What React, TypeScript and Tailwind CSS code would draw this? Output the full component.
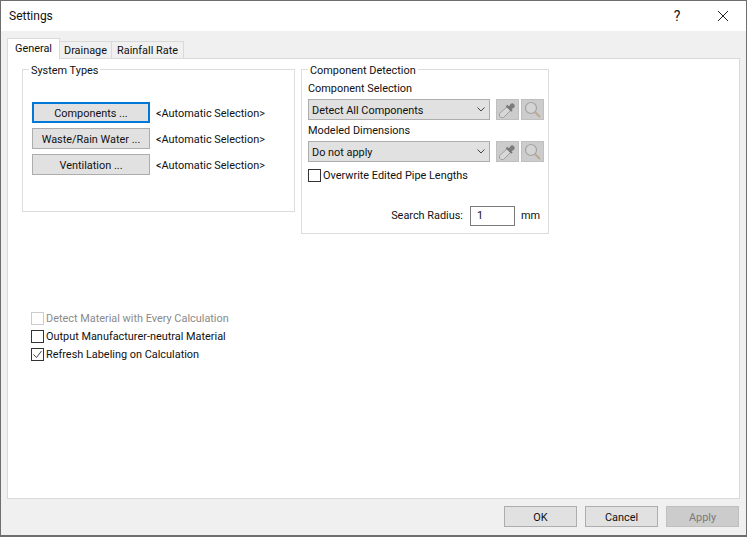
import React from 'react';

const font = { fontFamily: 'Roboto, "Noto Sans", sans-serif' };

function Picker() {
  return (
    <div className="w-[23px] h-[21px] bg-[#cccccc] border border-[#bfbfbf] flex items-center justify-center">
      <svg width="19" height="19" viewBox="0 0 19 19" fill="none">
        <path d="M9 7l3.5 3.5-7 7H3l-1.5-1.5v-2.5z" fill="#d8d8d8" stroke="#a0a0a0" strokeWidth="1" />
        <path d="M8.5 5.5l5.5 5.5" stroke="#767676" strokeWidth="2" />
        <path d="M10.5 7l2.2-3.2a2.6 2.6 0 0 1 3.6 3.6L13 9.5z" fill="#7c7c7c" />
      </svg>
    </div>
  );
}

function Finder() {
  return (
    <div className="w-[23px] h-[21px] bg-[#cccccc] border border-[#bfbfbf] flex items-center justify-center">
      <svg width="19" height="19" viewBox="0 0 19 19" fill="none">
        <circle cx="8" cy="8" r="5.5" fill="#d4d4d4" stroke="#a3a3a3" strokeWidth="1.2" />
        <path d="M12 12l5 5" stroke="#bda98f" strokeWidth="2" />
      </svg>
    </div>
  );
}

function Combo({ label }: { label: string }) {
  return (
    <div className="w-[182px] h-[21px] bg-[#e1e1e1] border border-[#adadad] flex items-center justify-between pl-[3px] pr-[4px] text-[#111]">
      <span className="pt-[2px]">{label}</span>
      <svg width="8" height="5" viewBox="0 0 8 5" fill="none">
        <path d="M0.5 0.5l3.5 3.5 3.5-3.5" stroke="#444" strokeWidth="1" />
      </svg>
    </div>
  );
}

function Check({ label, checked, disabled }: { label: string; checked?: boolean; disabled?: boolean }) {
  return (
    <div className="flex items-center h-[18px] gap-[2px]">
      <div className={`w-[13px] h-[13px] border bg-white flex items-center justify-center ${disabled ? 'border-[#cccccc]' : 'border-[#333333]'}`}>
        {checked && (
          <svg width="11" height="11" viewBox="0 0 11 11" fill="none">
            <path d="M1.5 5.5l3 3 5-6.5" stroke="#444" strokeWidth="1" />
          </svg>
        )}
      </div>
      <span className={`pt-[2px] ${disabled ? 'text-[#8a8a8a]' : 'text-[#111]'}`}>{label}</span>
    </div>
  );
}

function SystemButton({ label, focused }: { label: string; focused?: boolean }) {
  return (
    <div className="flex items-center gap-[6px]">
      <div className={`w-[118px] h-[21px] bg-[#e1e1e1] flex items-center justify-center pt-[2px] text-[#111] ${focused ? 'border-2 border-[#0078d7]' : 'border border-[#adadad]'}`}>
        {label}
      </div>
      <span className="text-[#111] pt-[2px]">&lt;Automatic Selection&gt;</span>
    </div>
  );
}

function FooterButton({ label, disabled }: { label: string; disabled?: boolean }) {
  return (
    <div className={`w-[73px] h-[21px] flex items-center justify-center pt-[2px] border ${disabled ? 'bg-[#cccccc] border-[#bfbfbf] text-[#7a7a7a]' : 'bg-[#e1e1e1] border-[#adadad] text-[#111]'}`}>
      {label}
    </div>
  );
}

export default function App() {
  return (
    <div style={font} className="w-[747px] h-[537px] flex flex-col bg-[#f0f0f0] border border-[#6e6e6e] border-b-2 text-[10.9px] leading-[16px] overflow-hidden">
      {/* Title bar */}
      <div className="h-[30px] shrink-0 bg-white flex items-center pl-[8px]">
        <span className="flex-1 text-[12px] text-[#111]">Settings</span>
        <span className="w-[46px] text-center text-[14px] text-[#111]">?</span>
        <div className="w-[46px] flex justify-center">
          <svg width="12" height="12" viewBox="0 0 12 12" fill="none">
            <path d="M1 1l10 10M11 1L1 11" stroke="#222" strokeWidth="1" />
          </svg>
        </div>
      </div>

      {/* Tabs */}
      <div className="h-[28px] shrink-0 flex items-end pl-[6px] relative z-10">
        <div className="h-[21px] w-[53px] bg-white border border-[#d9d9d9] border-b-0 flex items-center justify-center text-[#111]">General</div>
        <div className="h-[18px] w-[52px] bg-[#f0f0f0] border border-[#d9d9d9] border-l-0 flex items-center justify-center pt-[2px] text-[#111]">Drainage</div>
        <div className="h-[18px] w-[72px] bg-[#f0f0f0] border border-[#d9d9d9] border-l-0 flex items-center justify-center pt-[2px] text-[#111]">Rainfall Rate</div>
      </div>

      {/* Tab page */}
      <div className="mx-[6px] h-[441px] shrink-0 -mt-px bg-white border border-[#d9d9d9] pl-[14px] pt-[10px]">
        <div className="flex items-start gap-[6px]">
          <div className="w-[273px] h-[143px] border border-[#dcdcdc] relative pl-[9px] pt-[32px] flex flex-col gap-[5px]">
            <span className="absolute left-[6px] -top-[7px] bg-white px-[2px] text-[#111]">System Types</span>
            <SystemButton label="Components ..." focused />
            <SystemButton label="Waste/Rain Water ..." />
            <SystemButton label="Ventilation ..." />
          </div>

          <div className="w-[248px] h-[165px] border border-[#dcdcdc] relative pl-[6px] pt-[11px]">
            <span className="absolute left-[6px] -top-[7px] bg-white px-[2px] text-[#111]">Component Detection</span>
            <div className="text-[#111] h-[18px]">Component Selection</div>
            <div className="flex gap-[6px] h-[24px]">
              <Combo label="Detect All Components" />
              <div className="flex gap-[2px]"><Picker /><Finder /></div>
            </div>
            <div className="text-[#111] h-[18px]">Modeled Dimensions</div>
            <div className="flex gap-[6px] h-[25px]">
              <Combo label="Do not apply" />
              <div className="flex gap-[2px]"><Picker /><Finder /></div>
            </div>
            <Check label="Overwrite Edited Pipe Lengths" />
            <div className="flex items-center justify-end mt-[22px] pr-[12px]">
              <span className="text-[#111]">Search Radius:</span>
              <div className="w-[45px] h-[20px] ml-[7px] mr-[6px] border border-[#7a7a7a] bg-white flex items-center pl-[6px] text-[#111]">1</div>
              <span className="text-[#111] w-[15px]">mm</span>
            </div>
          </div>
        </div>

        <div className="mt-[75px] pl-[9px]">
          <Check label="Detect Material with Every Calculation" disabled />
          <Check label="Output Manufacturer-neutral Material" />
          <Check label="Refresh Labeling on Calculation" checked />
        </div>
      </div>

      {/* Footer */}
      <div className="flex justify-end gap-[8px] pt-[7px] pr-[7px]">
        <FooterButton label="OK" />
        <FooterButton label="Cancel" />
        <FooterButton label="Apply" disabled />
      </div>
    </div>
  );
}
